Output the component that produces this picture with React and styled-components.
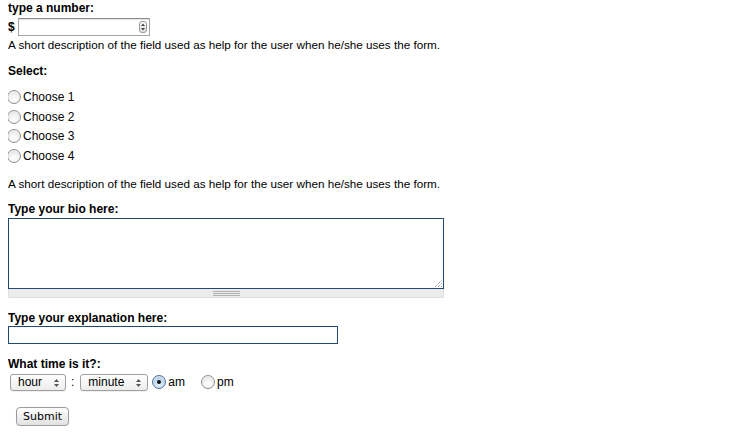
import React from 'react';
import styled, { createGlobalStyle } from 'styled-components';

const GlobalStyle = createGlobalStyle`
  body {
    margin: 0 8px;
    background: #fff;
    color: #000;
    font-family: "Liberation Sans", Arial, sans-serif;
  }
`;

const Form = styled.form`
  display: flex;
  flex-direction: column;
  align-items: flex-start;
  padding-top: 1px;
`;

const Label = styled.label`
  display: block;
  font-size: 12px;
  font-weight: bold;
  line-height: 15px;
  margin-top: ${(p) => p.$top || 0}px;
`;

const Help = styled.p`
  margin: ${(p) => p.$top || 0}px 0 0;
  font-size: 11.7px;
  line-height: 14px;
`;

const Row = styled.div`
  display: flex;
  align-items: center;
  height: 18px;
  margin-top: ${(p) => p.$top || 0}px;
  font-size: 12px;
`;

const Currency = styled.span`
  width: 10px;
  font-weight: bold;
  font-size: 12px;
`;

const FieldWrap = styled.div`
  position: relative;
  display: flex;
`;

const NumberInput = styled.input`
  box-sizing: border-box;
  width: 132px;
  height: 18px;
  margin: 0;
  border: 1px solid #a5a5a5;
  border-top-color: #8e8e8e;
  box-shadow: inset 0 1px 1px rgba(0, 0, 0, 0.12);
  font: 12px "Liberation Sans", Arial, sans-serif;
  padding: 0 16px 0 3px;
`;

const Spinner = styled.span`
  position: absolute;
  right: 3px;
  top: 3px;
  width: 8px;
  height: 12px;
  border: 1px solid #9a9a9a;
  border-radius: 3px;
  box-sizing: border-box;
  background: linear-gradient(#fafafa, #dcdcdc);
  display: flex;
  align-items: center;
  justify-content: center;
`;

const RadioList = styled.div`
  display: flex;
  flex-direction: column;
  margin-top: 8.5px;
`;

const RadioRow = styled.label`
  display: flex;
  align-items: center;
  height: 19.5px;
  font-size: 12px;
`;

const Radio = styled.input`
  appearance: none;
  box-sizing: border-box;
  width: 14px;
  height: 14px;
  margin: 0 2px 0 ${(p) => p.$left ?? -1}px;
  border-radius: 50%;
  border: 1px solid #8f8f8f;
  background: radial-gradient(circle at 50% 70%, #ffffff 0%, #f2f2f2 45%, #d2d2d2 100%);
  box-shadow: inset 0 1px 1px rgba(255, 255, 255, 0.8);
  position: relative;

  &:checked {
    border-color: #55709a;
    background: radial-gradient(circle at 50% 70%, #e6f2fc 0%, #b8d4ee 60%, #7aa6d4 100%);
  }
  &:checked::after {
    content: '';
    position: absolute;
    left: 4px;
    top: 4px;
    width: 4px;
    height: 4px;
    border-radius: 50%;
    background: #111;
  }
`;

const BioBox = styled.div`
  position: relative;
  display: flex;
  flex-direction: column;
  margin-top: 1px;
  width: 436px;
`;

const TextArea = styled.textarea`
  box-sizing: border-box;
  width: 436px;
  height: 71px;
  margin: 0;
  border: 1px solid #1f4a73;
  resize: none;
  outline: none;
  font: 12px "Liberation Sans", Arial, sans-serif;
`;

const Grip = styled.svg`
  position: absolute;
  right: 2px;
  top: 61px;
`;

const ResizeBar = styled.div`
  box-sizing: border-box;
  height: 9px;
  background: #ececec;
  border: 1px solid #e0e0e0;
  border-top: none;
  display: flex;
  align-items: center;
  justify-content: center;
`;

const TextInput = styled.input`
  box-sizing: border-box;
  width: 330px;
  height: 18px;
  margin: 0;
  border: 1px solid #1f4a73;
  outline: none;
  font: 12px "Liberation Sans", Arial, sans-serif;
`;

const SelectBox = styled.select`
  appearance: none;
  box-sizing: border-box;
  width: ${(p) => p.$w}px;
  height: 17px;
  margin: 0;
  padding: 0 0 0 7px;
  border: 1px solid #a0a0a0;
  border-radius: 3px;
  background: linear-gradient(#ffffff, #ececec);
  box-shadow: 0 1px 0 rgba(0, 0, 0, 0.06);
  font: 12px "Liberation Sans", Arial, sans-serif;
  color: #000;
`;

const SelectArrows = styled.svg`
  position: absolute;
  right: 7px;
  top: 5px;
  pointer-events: none;
`;

const Colon = styled.span`
  margin: 0 6px 0 5px;
  font-size: 12px;
`;

const RadioText = styled.span`
  font-size: 12px;
  margin-right: ${(p) => p.$right || 0}px;
`;

const SubmitButton = styled.button`
  box-sizing: border-box;
  margin: 16px 0 0 8px;
  width: 53px;
  height: 19px;
  padding: 0;
  border: 1px solid #9c9c9c;
  border-radius: 4px;
  background: linear-gradient(#ffffff, #f0f0f0 50%, #e2e2e2);
  box-shadow: 0 1px 1px rgba(0, 0, 0, 0.1);
  font: 11px "DejaVu Sans", "Liberation Sans", sans-serif;
  color: #000;
`;

const Arrows = () => (
  <SelectArrows width="5" height="8" viewBox="0 0 5 8">
    <path d="M0 3 L2.5 0 L5 3 Z" fill="#555" />
    <path d="M0 5 L2.5 8 L5 5 Z" fill="#555" />
  </SelectArrows>
);

const Select = ({ width, left, children }) => (
  <FieldWrap style={{ marginLeft: left }}>
    <SelectBox $w={width} defaultValue="">
      {children}
    </SelectBox>
    <Arrows />
  </FieldWrap>
);

const choices = ['Choose 1', 'Choose 2', 'Choose 3', 'Choose 4'];
const help = 'A short description of the field used as help for the user when he/she uses the form.';

const App = () => (
  <>
    <GlobalStyle />
    <Form onSubmit={(e) => e.preventDefault()}>
      <Label>type a number:</Label>
      <Row $top={2}>
        <Currency>$</Currency>
        <FieldWrap>
          <NumberInput type="text" />
          <Spinner>
            <svg width="4" height="8" viewBox="0 0 4 8">
              <path d="M0 3 L2 0.5 L4 3 Z" fill="#444" />
              <path d="M0 5 L2 7.5 L4 5 Z" fill="#444" />
            </svg>
          </Spinner>
        </FieldWrap>
      </Row>
      <Help $top={2}>{help}</Help>

      <Label $top={12}>Select:</Label>
      <RadioList>
        {choices.map((c) => (
          <RadioRow key={c}>
            <Radio type="radio" name="choice" />
            {c}
          </RadioRow>
        ))}
      </RadioList>
      <Help $top={11.5}>{help}</Help>

      <Label $top={11}>Type your bio here:</Label>
      <BioBox>
        <TextArea />
        <Grip width="8" height="8" viewBox="0 0 8 8">
          <path d="M1 8 L8 1 M4 8 L8 4 M7 8 L8 7" stroke="#777" strokeWidth="1" strokeDasharray="1 1" />
        </Grip>
        <ResizeBar>
          <svg width="27" height="5" viewBox="0 0 27 5">
            <path d="M0 0.5 H27 M0 2.5 H27 M0 4.5 H27" stroke="#b0b0b0" strokeWidth="1" />
          </svg>
        </ResizeBar>
      </BioBox>

      <Label $top={13}>Type your explanation here:</Label>
      <TextInput type="text" />

      <Label $top={13}>What time is it?:</Label>
      <Row $top={1}>
        <Select width={56} left={2}>
          <option value="">hour</option>
        </Select>
        <Colon>:</Colon>
        <Select width={68}>
          <option value="">minute</option>
        </Select>
        <Radio type="radio" name="ampm" defaultChecked $left={4} />
        <RadioText $right={16}>am</RadioText>
        <Radio type="radio" name="ampm" $left={0} />
        <RadioText>pm</RadioText>
      </Row>

      <SubmitButton type="submit">Submit</SubmitButton>
    </Form>
  </>
);

export default App;
